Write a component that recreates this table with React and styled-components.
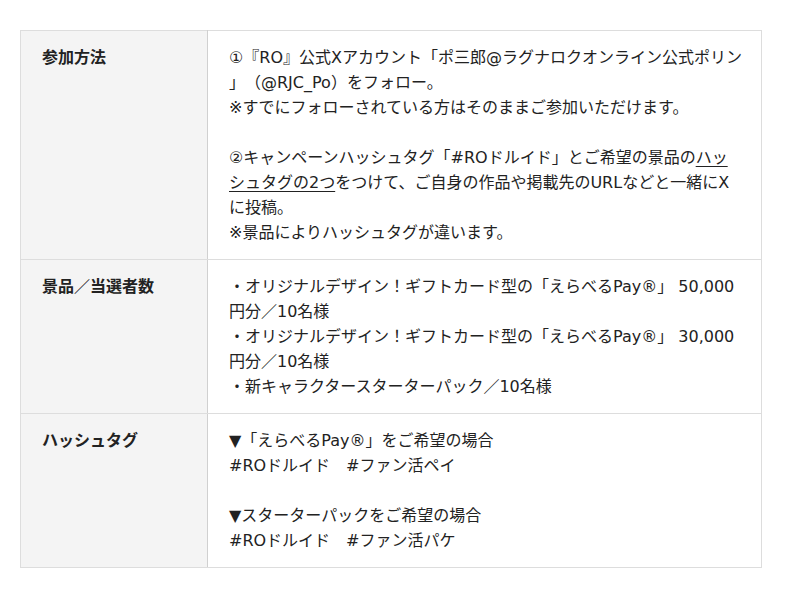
import styled, { createGlobalStyle } from "styled-components";

const GlobalStyle = createGlobalStyle`
  body {
    margin: 0;
    background: #fff;
    font-family: "DejaVu Sans", "Noto Sans CJK JP", sans-serif;
    color: #222;
    text-spacing-trim: space-all;
  }
`;

const rows = [
  {
    title: "参加方法",
    body: (
      <>
        ①『RO』公式Xアカウント「ポ三郎@ラグナロクオンライン公式ポリン
        <br />
        」（@RJC_Po）をフォロー。
        <br />
        ※すでにフォローされている方はそのままご参加いただけます。
        <br />
        <br />
        ②キャンペーンハッシュタグ「#ROドルイド」とご希望の景品の<Mark>ハッ</Mark>
        <br />
        <Mark>シュタグの2つ</Mark>をつけて、ご自身の作品や掲載先のURLなどと一緒にX
        <br />
        に投稿。
        <br />
        ※景品によりハッシュタグが違います。
      </>
    )
  },
  {
    title: "景品／当選者数",
    body: (
      <>
        ・オリジナルデザイン！ギフトカード型の「えらべるPay®」 50,000
        <br />
        円分／10名様
        <br />
        ・オリジナルデザイン！ギフトカード型の「えらべるPay®」 30,000
        <br />
        円分／10名様
        <br />
        ・新キャラクタースターターパック／10名様
      </>
    )
  },
  {
    title: "ハッシュタグ",
    body: (
      <>
        ▼「えらべるPay®」をご希望の場合
        <br />
        #ROドルイド　#ファン活ペイ
        <br />
        <br />
        ▼スターターパックをご希望の場合
        <br />
        #ROドルイド　#ファン活パケ
      </>
    )
  }
];

function Mark({ children }) {
  return <Underline>{children}</Underline>;
}

export default function App() {
  return (
    <Page>
      <GlobalStyle />
      <Table>
        <tbody>
          {rows.map((row) => (
            <tr key={row.title}>
              <Head>{row.title}</Head>
              <Cell>{row.body}</Cell>
            </tr>
          ))}
        </tbody>
      </Table>
    </Page>
  );
}

const Page = styled.div`
  padding: 30px 38px 30px 20px;
`;

const Table = styled.table`
  width: 742px;
  border-collapse: collapse;
  table-layout: fixed;
  border: 1px solid #ddd;
`;

const Head = styled.th`
  width: 187px;
  box-sizing: border-box;
  padding: 14px 20px 14px 21px;
  background: #f4f4f4;
  border: 1px solid #ddd;
  border-right-color: #d0d0d0;
  text-align: left;
  vertical-align: top;
  font-size: 16px;
  font-weight: 700;
  line-height: 25px;
`;

const Cell = styled.td`
  padding: 14px 10px 14px 21px;
  border: 1px solid #ddd;
  vertical-align: top;
  font-size: 16px;
  line-height: 25px;
  white-space: nowrap;
`;

const Underline = styled.span`
  text-decoration: underline;
  text-underline-offset: 3px;
`;
